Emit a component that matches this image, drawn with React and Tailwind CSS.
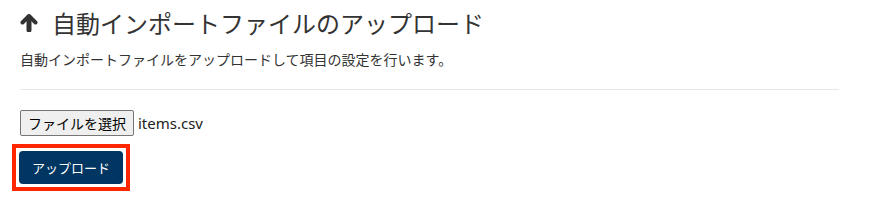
const jp = { fontFamily: '"Noto Sans CJK JP", "Noto Sans", sans-serif' };

function ArrowUp() {
  return (
    <svg viewBox="0 0 18 19" className="w-[18px] h-[19px] mr-[14px] shrink-0" fill="none" stroke="#333" strokeLinecap="round" strokeLinejoin="round">
      <path d="M2.5 9.5 L9 3 L15.5 9.5" strokeWidth="4" />
      <path d="M9 4 L9 17" strokeWidth="5" />
    </svg>
  );
}

export default function App() {
  return (
    <div className="bg-white w-[869px] h-[212px] text-[#333]" style={jp}>
      <div className="pl-5 pr-[30px] pt-[8px]">
        <h2 className="flex items-center text-[24px] leading-[29px] font-normal">
          <ArrowUp />
          自動インポートファイルのアップロード
        </h2>
        <p className="mt-[12px] text-[14px] leading-[21px]">
          自動インポートファイルをアップロードして項目の設定を行います。
        </p>
        <hr className="mt-[19px] border-0 border-t border-[#e8e8e8]" />

        <div className="mt-[20px] flex items-center">
          <button className="h-[26px] px-[7px] text-[14px] leading-[20px] text-black bg-[#efefef] border border-[#767676] rounded-[2px]">
            ファイルを選択
          </button>
          <span
            className="ml-[4px] text-[15px] text-[#222]"
            style={{ fontFamily: '"Noto Sans", sans-serif' }}
          >
            items.csv
          </span>
        </div>

        <div className="mt-[8px] -ml-2 inline-block border-4 border-[#ff2600] p-[3px]">
          <button className="block h-[33px] px-[13px] text-[13px] leading-5 text-white bg-[#003661] rounded-[4px]">
            アップロード
          </button>
        </div>
      </div>
    </div>
  );
}
